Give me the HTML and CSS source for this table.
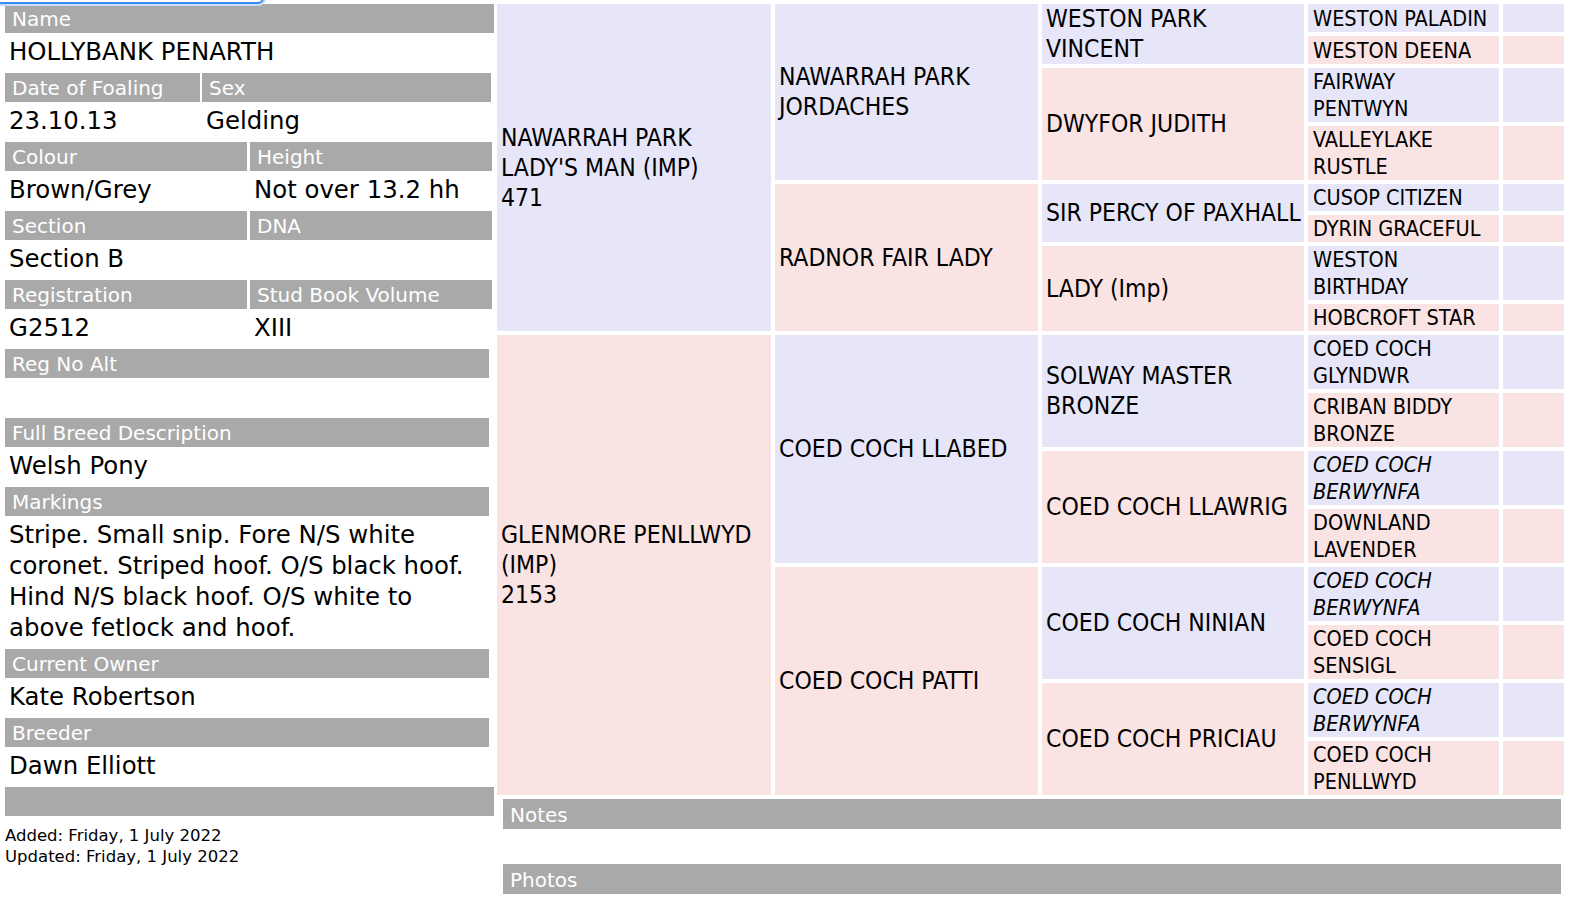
FILE: index.html
```html
<!DOCTYPE html>
<html>
<head>
<meta charset="utf-8">
<title>HOLLYBANK PENARTH</title>
<link rel="stylesheet" href="styles.css">
</head>
<body>
<div class="focus-ring"></div>
<div class="page">
  <div class="details">
    <div class="row">
      <div class="field w-full">
        <div class="label">Name</div>
        <div class="value">HOLLYBANK PENARTH</div>
      </div>
    </div>
    <div class="row">
      <div class="field w-date">
        <div class="label">Date of Foaling</div>
        <div class="value">23.10.13</div>
      </div>
      <div class="field w-sex">
        <div class="label">Sex</div>
        <div class="value">Gelding</div>
      </div>
    </div>
    <div class="row gap3">
      <div class="field w-half">
        <div class="label">Colour</div>
        <div class="value">Brown/Grey</div>
      </div>
      <div class="field w-half">
        <div class="label">Height</div>
        <div class="value">Not over 13.2 hh</div>
      </div>
    </div>
    <div class="row gap3">
      <div class="field w-half">
        <div class="label">Section</div>
        <div class="value">Section B</div>
      </div>
      <div class="field w-half">
        <div class="label">DNA</div>
        <div class="value">&nbsp;</div>
      </div>
    </div>
    <div class="row gap3">
      <div class="field w-half">
        <div class="label">Registration</div>
        <div class="value">G2512</div>
      </div>
      <div class="field w-half">
        <div class="label">Stud Book Volume</div>
        <div class="value">XIII</div>
      </div>
    </div>
    <div class="row">
      <div class="field w-wide">
        <div class="label">Reg No Alt</div>
        <div class="value">&nbsp;</div>
      </div>
    </div>
    <div class="row">
      <div class="field w-wide">
        <div class="label">Full Breed Description</div>
        <div class="value">Welsh Pony</div>
      </div>
    </div>
    <div class="row">
      <div class="field w-wide">
        <div class="label">Markings</div>
        <div class="value">Stripe. Small snip. Fore N/S white coronet. Striped hoof. O/S black hoof. Hind N/S black hoof. O/S white to above fetlock and hoof.</div>
      </div>
    </div>
    <div class="row">
      <div class="field w-wide">
        <div class="label">Current Owner</div>
        <div class="value">Kate Robertson</div>
      </div>
    </div>
    <div class="row">
      <div class="field w-wide">
        <div class="label">Breeder</div>
        <div class="value">Dawn Elliott</div>
      </div>
    </div>
    <div class="row">
      <div class="field w-full">
        <div class="label">&nbsp;</div>
      </div>
    </div>
    <div class="meta">
      <div>Added: Friday, 1 July 2022</div>
      <div>Updated: Friday, 1 July 2022</div>
    </div>
  </div>

  <div class="pedigree-area">
    <table class="pedigree">
      <colgroup>
        <col class="c1"><col class="c2"><col class="c3"><col class="c4"><col class="c5">
      </colgroup>
      <tr>
        <td rowspan="8" class="sire big">NAWARRAH PARK<br>LADY'S MAN (IMP)<br>471</td>
        <td rowspan="4" class="sire big">NAWARRAH PARK<br>JORDACHES</td>
        <td rowspan="2" class="sire big">WESTON PARK<br>VINCENT</td>
        <td class="sire small">WESTON PALADIN</td>
        <td class="sire"></td>
      </tr>
      <tr>
        <td class="dam small">WESTON DEENA</td>
        <td class="dam"></td>
      </tr>
      <tr>
        <td rowspan="2" class="dam big">DWYFOR JUDITH</td>
        <td class="sire small">FAIRWAY<br>PENTWYN</td>
        <td class="sire"></td>
      </tr>
      <tr>
        <td class="dam small">VALLEYLAKE<br>RUSTLE</td>
        <td class="dam"></td>
      </tr>
      <tr>
        <td rowspan="4" class="dam big">RADNOR FAIR LADY</td>
        <td rowspan="2" class="sire big">SIR PERCY OF PAXHALL</td>
        <td class="sire small">CUSOP CITIZEN</td>
        <td class="sire"></td>
      </tr>
      <tr>
        <td class="dam small">DYRIN GRACEFUL</td>
        <td class="dam"></td>
      </tr>
      <tr>
        <td rowspan="2" class="dam big">LADY (Imp)</td>
        <td class="sire small">WESTON<br>BIRTHDAY</td>
        <td class="sire"></td>
      </tr>
      <tr>
        <td class="dam small">HOBCROFT STAR</td>
        <td class="dam"></td>
      </tr>
      <tr>
        <td rowspan="8" class="dam big">GLENMORE PENLLWYD<br>(IMP)<br>2153</td>
        <td rowspan="4" class="sire big">COED COCH LLABED</td>
        <td rowspan="2" class="sire big">SOLWAY MASTER<br>BRONZE</td>
        <td class="sire small">COED COCH<br>GLYNDWR</td>
        <td class="sire"></td>
      </tr>
      <tr>
        <td class="dam small">CRIBAN BIDDY<br>BRONZE</td>
        <td class="dam"></td>
      </tr>
      <tr>
        <td rowspan="2" class="dam big">COED COCH LLAWRIG</td>
        <td class="sire small ital">COED COCH<br>BERWYNFA</td>
        <td class="sire"></td>
      </tr>
      <tr>
        <td class="dam small">DOWNLAND<br>LAVENDER</td>
        <td class="dam"></td>
      </tr>
      <tr>
        <td rowspan="4" class="dam big">COED COCH PATTI</td>
        <td rowspan="2" class="sire big">COED COCH NINIAN</td>
        <td class="sire small ital">COED COCH<br>BERWYNFA</td>
        <td class="sire"></td>
      </tr>
      <tr>
        <td class="dam small">COED COCH<br>SENSIGL</td>
        <td class="dam"></td>
      </tr>
      <tr>
        <td rowspan="2" class="dam big">COED COCH PRICIAU</td>
        <td class="sire small ital">COED COCH<br>BERWYNFA</td>
        <td class="sire"></td>
      </tr>
      <tr>
        <td class="dam small">COED COCH<br>PENLLWYD</td>
        <td class="dam"></td>
      </tr>
    </table>
    <div class="section-bar">Notes</div>
    <div class="section-body"></div>
    <div class="section-bar">Photos</div>
  </div>
</div>
</body>
</html>
```

FILE: styles.css
```css
html, body {
  margin: 0;
  padding: 0;
  background: #ffffff;
}
body {
  font-family: "DejaVu Sans", Verdana, sans-serif;
  color: #000;
  position: relative;
}
.focus-ring {
  position: absolute;
  left: -6px;
  top: -20px;
  width: 266px;
  height: 20px;
  border: 2px solid #3d8bf2;
  border-radius: 6px;
  box-shadow: 0 0 0 2px #c9ddfb;
}
.page {
  display: flex;
  align-items: flex-start;
}
.details {
  width: 489px;
  padding: 4px 0 0 5px;
  flex: none;
}
.row {
  display: flex;
  gap: 2px;
}
.row.gap3 {
  gap: 3px;
}
.w-full { width: 489px; }
.w-wide { width: 484px; }
.w-date { width: 195px; }
.w-sex { width: 289px; }
.w-half { width: 242px; }
.label {
  background: #a9a9a9;
  color: #ffffff;
  height: 29px;
  line-height: 31px;
  font-size: 20px;
  padding-left: 7px;
  white-space: nowrap;
  overflow: hidden;
}
.value {
  font-size: 24.4px;
  line-height: 31px;
  padding: 3px 4px 6px 4px;
}
.meta {
  margin-top: 9px;
  font-size: 16.5px;
  line-height: 21px;
}
.pedigree-area {
  flex: none;
  width: 1075px;
  margin-left: -1px;
}
.pedigree {
  border-collapse: separate;
  border-spacing: 4px;
  table-layout: fixed;
  width: 1075px;
  font-family: "DejaVu Sans Condensed", "DejaVu Sans", sans-serif;
  font-stretch: condensed;
}
.c1 { width: 274px; }
.c2 { width: 263px; }
.c3 { width: 262px; }
.c4 { width: 191px; }
.c5 { width: 61px; }
.pedigree td {
  padding: 0 2px 0 4px;
  vertical-align: middle;
  white-space: nowrap;
  overflow: hidden;
}
.pedigree td.big {
  font-size: 24.5px;
  line-height: 30px;
}
.pedigree td.small {
  font-size: 21.5px;
  line-height: 27px;
  padding-left: 5px;
}
.pedigree td.ital {
  font-style: italic;
}
.sire { background: #e6e6f8; }
.dam { background: #f9e3e3; }
.section-bar {
  margin-left: 10px;
  width: 1058px;
  background: #a9a9a9;
  color: #fff;
  height: 30px;
  line-height: 32px;
  font-size: 20px;
  padding-left: 7px;
  box-sizing: border-box;
}
.section-body {
  height: 35px;
}
```
